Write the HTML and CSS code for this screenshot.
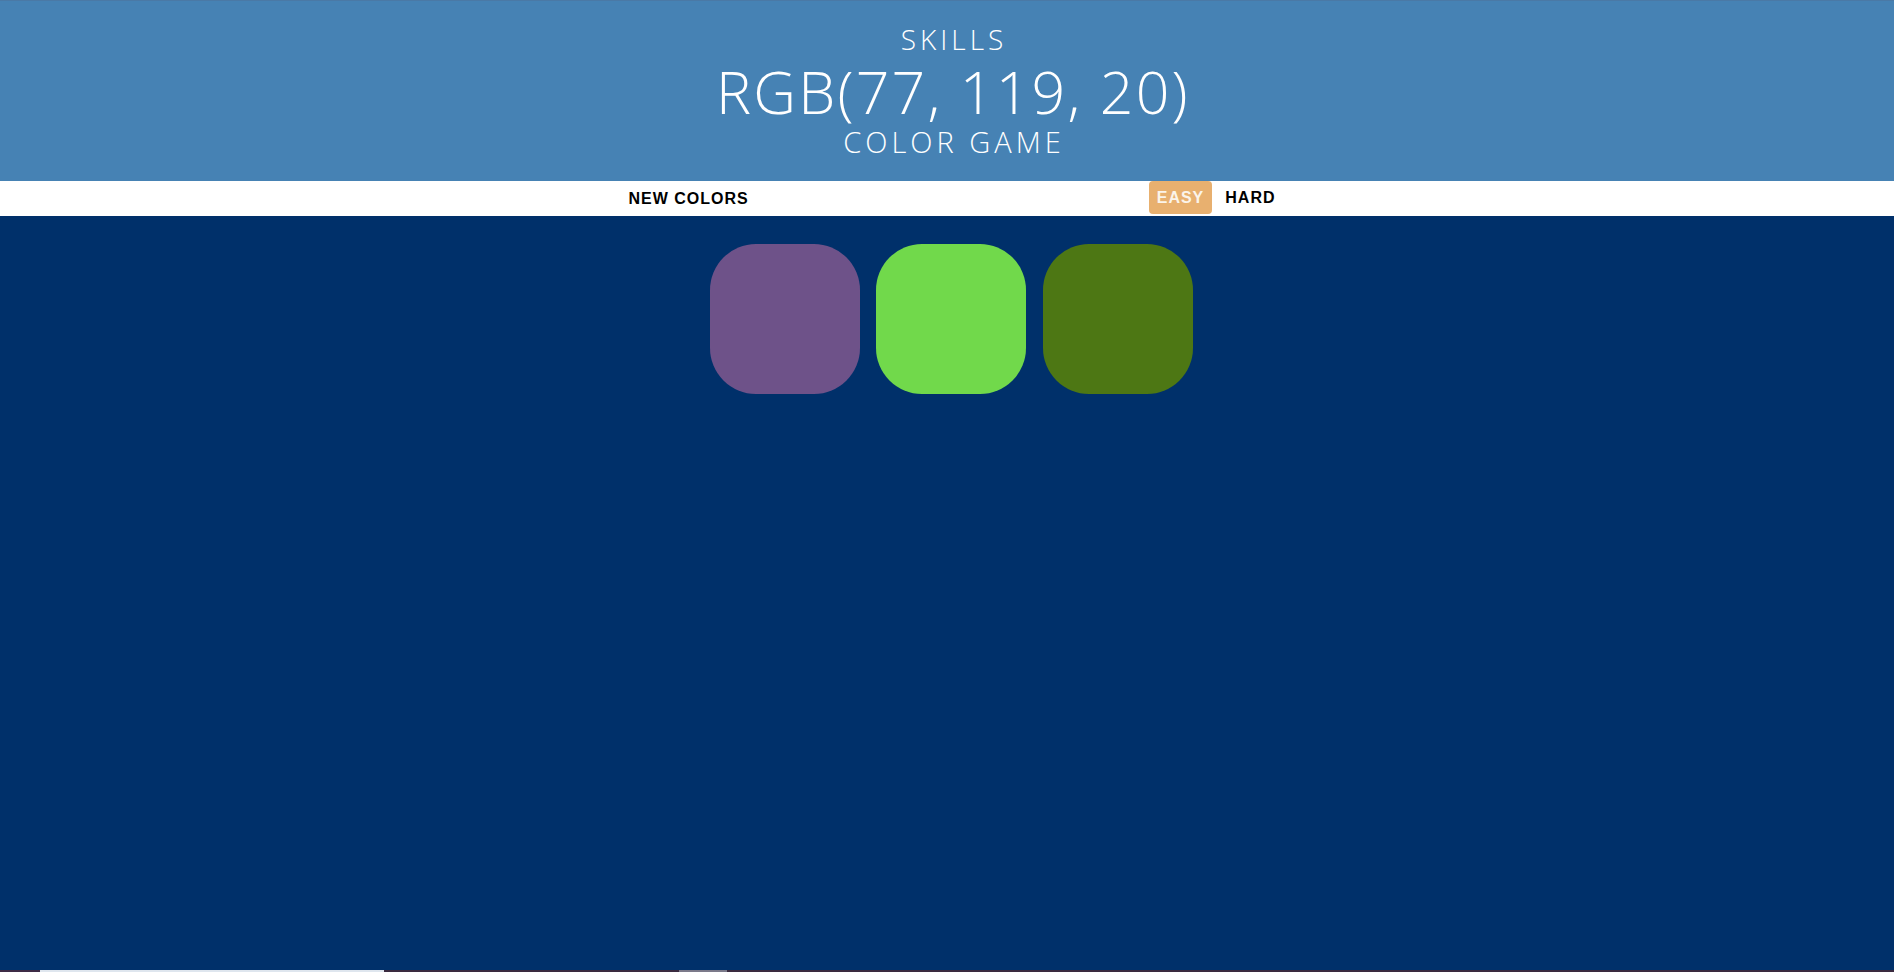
FILE: index.html
```html
<!DOCTYPE html>
<html lang="en">
<head>
<meta charset="utf-8">
<title>Color Game</title>
<link rel="stylesheet" href="styles.css">
</head>
<body>
  <h1 class="header">
    <span class="header-top">SKILLS</span>
    <span class="header-display">RGB(77, 119, 20)</span>
    <span class="header-bottom">COLOR GAME</span>
  </h1>
  <div class="stripe">
    <button class="btn">New Colors</button>
    <span class="message"></span>
    <button class="btn mode selected">Easy</button>
    <button class="btn mode">Hard</button>
  </div>
  <main class="board">
    <div class="square sq-purple"></div>
    <div class="square sq-green"></div>
    <div class="square sq-olive"></div>
  </main>
  <div class="edge">
    <span class="edge-seg edge-dark1"></span>
    <span class="edge-seg edge-light"></span>
    <span class="edge-seg edge-dark2"></span>
    <span class="edge-seg edge-grey"></span>
    <span class="edge-seg edge-dark3"></span>
  </div>
</body>
</html>
```

FILE: styles.css
```css
* { box-sizing: border-box; }

html, body {
  margin: 0;
  padding: 0;
  height: 100%;
}

body {
  display: flex;
  flex-direction: column;
  height: 972px;
  background: #00306a;
  overflow: hidden;
}

.header {
  margin: 0;
  flex: none;
  height: 181px;
  border-top: 1px solid #4a79a6;
  padding: 20px 0 0 10px;
  background: #4682b4;
  color: #ffffff;
  font-family: "Open Sans", "Liberation Sans", sans-serif;
  font-weight: 350;
  display: flex;
  flex-direction: column;
  align-items: center;
  text-transform: uppercase;
}

.header-top {
  font-size: 28px;
  line-height: 37px;
  letter-spacing: 4px;
  padding-left: 4px;
}

.header-display {
  font-size: 59px;
  line-height: 66px;
  letter-spacing: 2.2px;
  padding-left: 2px;
}

.header-bottom {
  font-size: 29px;
  line-height: 36px;
  letter-spacing: 4px;
  padding-left: 4px;
}

.stripe {
  flex: none;
  height: 35px;
  background: #ffffff;
  display: flex;
  justify-content: center;
  align-items: flex-start;
  padding-left: 10px;
}

.btn {
  border: none;
  background: none;
  height: 35px;
  padding: 0 8px;
  margin: 0;
  font-family: "Liberation Sans", Arial, sans-serif;
  font-size: 16px;
  font-weight: 700;
  letter-spacing: 1px;
  text-transform: uppercase;
  color: #000000;
  cursor: pointer;
}

.mode {
  height: 33px;
  border-radius: 4px;
}

.mode + .mode {
  margin-left: 5px;
}

.selected {
  background: #e8b06f;
  color: #fbf4ea;
}

.message {
  width: 392px;
  flex: none;
}

.board {
  flex: 1;
  display: flex;
  justify-content: center;
  align-items: flex-start;
  gap: 16.5px;
  padding: 28px 0 0 8px;
  background: #00306a;
}

.square {
  width: 150px;
  height: 150px;
  border-radius: 46px;
  flex: none;
}

.sq-purple { background: #6e5289; }
.sq-green { background: #71d94b; }
.sq-olive { background: #4d7714; }

.edge {
  flex: none;
  height: 2px;
  display: flex;
}

.edge-seg { height: 2px; flex: none; }
.edge-dark1 { width: 40px; background: #3e2b45; }
.edge-light { width: 344px; background: #dfe6ee; }
.edge-dark2 { width: 295px; background: #3a2a3f; }
.edge-grey { width: 48px; background: #7c7a8a; }
.edge-dark3 { flex: 1; background: #3a2a3f; }
```
